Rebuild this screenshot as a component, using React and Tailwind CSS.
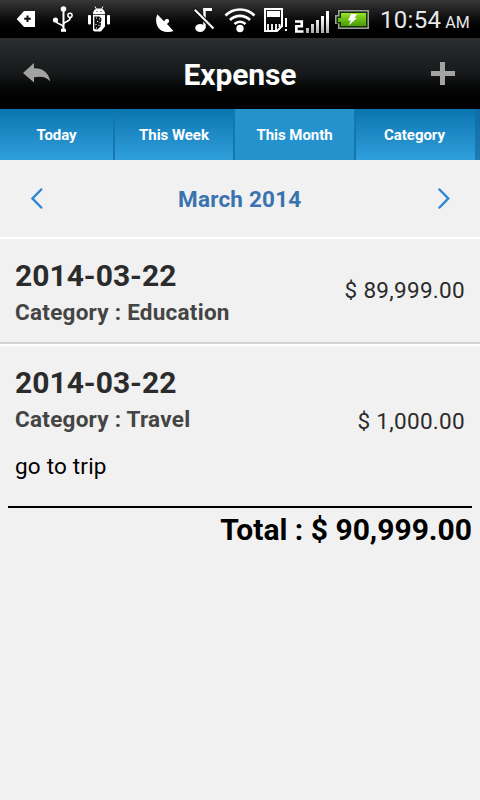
import React from "react";

function Tag() {
  return (
    <svg className="ml-[17px] mt-[10px] h-[17px] w-[18px] shrink-0" viewBox="0 0 18 17">
      <path d="M7 1h11v16H7L0 9.3V8.7Z" fill="#fff" />
      <path d="M10.5 5.5v6.5M7.2 8.7h6.6" stroke="#111" strokeWidth="2" />
    </svg>
  );
}

function Usb() {
  return (
    <svg className="ml-[17px] mt-[6px] h-[27px] w-[22px] shrink-0" viewBox="0 0 22 27" fill="none" stroke="#fff">
      <path d="M11.5 3v22" strokeWidth="2" />
      <circle cx="11.5" cy="3" r="2.8" fill="#fff" stroke="none" />
      <circle cx="3.5" cy="14" r="2.6" fill="#fff" stroke="none" />
      <path d="M3.5 14c0 5 8 3 8 8" strokeWidth="1.6" />
      <circle cx="18" cy="9.3" r="2.1" strokeWidth="1.5" />
      <path d="M18.2 11.5c0 5-6.7 3.5-6.7 7" strokeWidth="1.6" />
      <path d="M9 22.8h5v3H9z" fill="#fff" stroke="none" />
    </svg>
  );
}

function Robot() {
  return (
    <svg className="ml-[14px] mt-[6px] h-[27px] w-[22px] shrink-0" viewBox="0 0 22 27">
      <path d="M5 8C5 4.500 7 2.500 11 2.500S17 4.500 17 8Z" fill="#fff" />
      <path d="M7 .5 9 4M15 .5 13 4" stroke="#fff" />
      <path d="M8.500 5.500h1M12.500 5.500h1" stroke="#222" />
      <path d="M5 8.700h12v11.500l-4 5.300H6.500L5 24.500Z" fill="#fff" />
      <path d="M6.300 10.500h5.200l2 2-1 8-3 3-3.200-.5Z" fill="#111" />
      <path d="M8 12h1M11 13h1M9 15.500h1M11.500 16.500h1M7.500 18.500h1M10.500 19.500h1M8 22h1" stroke="#fff" strokeWidth="1.2" />
      <rect x="0" y="9" width="3" height="9.500" rx="1" fill="#fff" />
      <rect x="19" y="9" width="3" height="9.500" rx="1" fill="#fff" />
    </svg>
  );
}

function Dish() {
  return (
    <svg className="ml-[46px] mt-[14px] h-[18px] w-[18px] shrink-0" viewBox="0 0 18 18" fill="#fff">
      <path d="M1.500 .5C-1 5 0 11 3 14.500S12 19 17.500 17L11 10 12 9A2.200 2.200 0 1 0 8.800 6.500L8 7.300Z" />
    </svg>
  );
}

function MutedNote() {
  return (
    <svg className="ml-[20px] mt-[7px] h-[26px] w-[21px] shrink-0" viewBox="0 0 21 26">
      <path d="M10.500 1.500v20" stroke="#fff" strokeWidth="2.500" />
      <path d="M9.300 1h8.700v3H9.300z" fill="#fff" />
      <ellipse cx="6.200" cy="21" rx="5" ry="4" fill="#fff" />
      <path d="M0 2 19 21.500" stroke="#111" strokeWidth="4.500" />
      <path d="M.8 2.800 19.500 21.500" stroke="#fff" strokeWidth="2" />
    </svg>
  );
}

function Wifi() {
  return (
    <svg className="ml-[9px] mt-[6px] h-[27px] w-[32px] shrink-0" viewBox="0 0 32 27" fill="none" stroke="#fff" strokeWidth="2.700">
      <path d="M1.500 9.500a20.500 20.500 0 0 1 29 0" />
      <path d="M6 14a14.200 14.200 0 0 1 20 0" />
      <path d="M10.500 18a7.800 7.800 0 0 1 11 0" />
      <circle cx="16" cy="22.500" r="3.700" fill="#fff" stroke="none" />
    </svg>
  );
}

function SimCard() {
  return (
    <svg className="ml-[8px] mt-[8px] h-[25px] w-[25px] shrink-0" viewBox="0 0 25 25">
      <path d="M1 1h17v17l-5 5H1Z" fill="none" stroke="#fff" strokeWidth="2" />
      <path d="M3 3h13v6H3z" fill="#fff" />
      <path d="M4 16v6M8 16v6M12 16v6M15.500 16v3" stroke="#fff" strokeWidth="1.800" />
      <path d="M22 10v9M22 21v2" stroke="#fff" strokeWidth="2" />
    </svg>
  );
}

function Signal() {
  return (
    <svg className="ml-[6px] mt-[11px] h-[22px] w-[35px] shrink-0" viewBox="0 0 35 22">
      <path d="M0 10.500h6.800v4.800H1.300v5.200H8.500" fill="none" stroke="#fff" strokeWidth="2.600" />
      <defs>
        <linearGradient id="bars" x1="0" y1="0" x2="0" y2="22" gradientUnits="userSpaceOnUse">
          <stop offset=".3" stopColor="#fff" />
          <stop offset="1" stopColor="#aaa" />
        </linearGradient>
      </defs>
      <path d="M11 17h3v5h-3zM16 13h3v9h-3zM21 9h3v13h-3zM26 5h3v17h-3zM31 0h3v22h-3z" fill="url(#bars)" />
    </svg>
  );
}

function Battery() {
  return (
    <svg className="ml-[5px] mt-[10px] h-[19px] w-[34px] shrink-0" viewBox="0 0 34 19">
      <defs>
        <linearGradient id="cell" x1="0" y1="0" x2="0" y2="1">
          <stop offset="0" stopColor="#9be32c" />
          <stop offset=".5" stopColor="#6bbd12" />
          <stop offset="1" stopColor="#4b9a08" />
        </linearGradient>
      </defs>
      <path d="M3 0h31v19H3v-5H0V5h3z" fill="#a0a0a0" />
      <path d="M4.500 1.500h28v16h-28v-4H1.500v-7h3z" fill="#173000" />
      <path d="M6 3h25v13H6v-4H3V8h3z" fill="url(#cell)" />
      <path d="M16 4h6l-2.500 4H22l-8.500 7.500L16 10.500h-3Z" fill="#fff" />
    </svg>
  );
}

function StatusBar() {
  return (
    <div className="flex h-[38px] items-start overflow-hidden border-b-2 border-black bg-linear-to-b from-[#38383a] to-black">
      <Tag />
      <Usb />
      <Robot />
      <Dish />
      <MutedNote />
      <Wifi />
      <SimCard />
      <Signal />
      <Battery />
      <div className="ml-[11px] mt-[4px] flex items-baseline whitespace-nowrap text-[#e8e8e8]">
        <span className="text-[24px] leading-8 tracking-[0.3px]">10:54</span>
        <span className="ml-[4px] text-[16px]">AM</span>
      </div>
    </div>
  );
}

function Header() {
  return (
    <header className="flex h-[71px] items-start justify-between bg-linear-to-b from-[#2b2f32] via-[#17191a] to-black">
      <svg className="ml-[23px] mt-[25px] h-[20px] w-[28px]" viewBox="0 0 28 20">
        <path d="M0 10 11 0v5.300C19 5 25.500 9 27.300 18.500 23 13.500 18 13.300 11 14.300v5.200Z" fill="#a3a3a3" />
      </svg>
      <h1 className="mt-[19px] mr-[2px] text-[30px] leading-9 font-bold tracking-[-0.1px] text-white">Expense</h1>
      <svg className="mr-[25px] mt-[24px] h-[23px] w-[24px]" viewBox="0 0 24 23">
        <path d="M9 0h5v9h10v5H14v9H9v-9H0V9h9z" fill="#a3a3a3" />
      </svg>
    </header>
  );
}

function Tabs() {
  const base = "flex h-full items-start justify-center border-r-2 border-[#1478ae] pt-[16px]";
  const idle = "bg-linear-to-b from-[#0775b1] to-[#2f9fdb] bg-clip-padding";
  return (
    <nav className="flex h-[51px] bg-linear-to-b from-[#0e6ea5] to-[#1c7cb0] text-[15px] leading-5 font-bold tracking-[-0.05px] text-white">
      <div className={`${base} ${idle} w-[115px]`}>Today</div>
      <div className={`${base} ${idle} w-[120px]`}>This Week</div>
      <div className={`${base} w-[121px] bg-[#2392cd]`}>This Month</div>
      <div className={`flex h-full w-[119px] items-start justify-center pt-[16px] pr-[2px] ${idle}`}>Category</div>
    </nav>
  );
}

function Chevron({ className, d }) {
  return (
    <svg className={className} viewBox="0 0 12 21" fill="none" stroke="#2f86d6" strokeWidth="2.500" strokeLinecap="round">
      <path d={d} />
    </svg>
  );
}

function MonthPicker() {
  return (
    <div className="flex h-[79px] items-start justify-between border-b-2 border-white">
      <Chevron className="ml-[30.500px] mt-[27.500px] h-[21px] w-[12px]" d="M10.200 1.500 1.500 10.500 10.200 19.500" />
      <div className="mt-[25px] mr-[1px] text-[22.5px] leading-7 font-bold tracking-[0.2px] text-[#3a73b0]">March 2014</div>
      <Chevron className="mr-[30px] mt-[27.500px] h-[21px] w-[12px]" d="M1.500 1.500 10.200 10.500 1.500 19.500" />
    </div>
  );
}

function Entry({ date, category, children }) {
  return (
    <div className="whitespace-nowrap">
      <div className="text-[30px] leading-9 font-bold text-[#2b2b2b]">{date}</div>
      <div className="mt-[4px] text-[22.5px] leading-7 font-bold tracking-[0.25px] text-[#444]">Category : {category}</div>
      {children}
    </div>
  );
}

export default function App() {
  return (
    <div className="h-[800px] w-[480px] overflow-hidden bg-[#f1f1f1] font-[Roboto,sans-serif]">
      <StatusBar />
      <Header />
      <Tabs />
      <MonthPicker />
      <section className="flex h-[105px] items-start justify-between border-b-2 border-[#d3d3d3] px-[15px] pt-[19px]">
        <Entry date="2014-03-22" category="Education" />
        <div className="mt-[18px] text-[22.5px] leading-7 tracking-[0.3px] text-[#2b2b2b]">$ 89,999.00</div>
      </section>
      <section className="flex h-[162px] items-start justify-between border-t-2 border-white px-[15px] pt-[19px]">
        <Entry date="2014-03-22" category="Travel">
          <div className="mt-[19px] text-[22.5px] leading-7 tracking-[0.2px] text-black">go to trip</div>
        </Entry>
        <div className="mt-[42px] text-[22.5px] leading-7 tracking-[0.3px] text-[#2b2b2b]">$ 1,000.00</div>
      </section>
      <footer className="mx-2 border-t-2 border-black pt-[4px] text-right text-[30px] leading-9 font-bold text-black">
        Total : $ 90,999.00
      </footer>
    </div>
  );
}
